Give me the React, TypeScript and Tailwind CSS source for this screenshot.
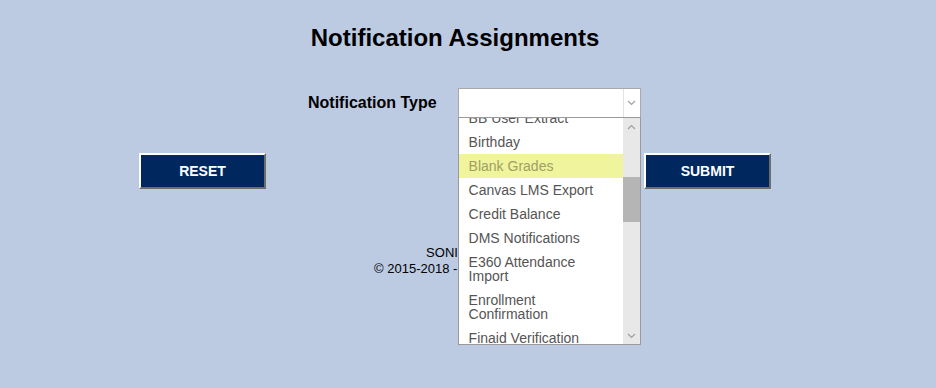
const items = [
  'BB User Extract',
  'Birthday',
  'Blank Grades',
  'Canvas LMS Export',
  'Credit Balance',
  'DMS Notifications',
  'E360 Attendance Import',
  'Enrollment Confirmation',
  'Finaid Verification',
  'Financial Aid Award',
]

function Chevron({ up }: { up?: boolean }) {
  return (
    <svg width="9" height="6" viewBox="0 0 9 6" className="block">
      <path
        d={up ? 'M1 5 L4.5 1.5 L8 5' : 'M1 1 L4.5 4.5 L8 1'}
        fill="none"
        stroke="#a0a0a0"
        strokeWidth="1.2"
      />
    </svg>
  )
}

export default function App() {
  return (
    <div className="w-[936px] h-[388px] bg-[#bccae2] font-['Liberation_Sans',Arial,sans-serif] overflow-hidden">
      <div className="w-[910px] flex flex-col">
        <h1 className="pt-[24px] text-center text-[24px] leading-[28px] font-bold text-black">
          Notification Assignments
        </h1>

        <div className="mt-[36px] flex items-center pl-[308px]">
          <label className="text-[16px] font-bold text-black">Notification Type</label>
          <div className="relative ml-[21px] w-[183px] h-[30px] border border-[#a9a9a9] bg-white">
            <div className="absolute right-0 top-0 h-full w-[17px] border-l border-[#e3e3e3] flex items-center justify-center">
              <Chevron />
            </div>

            {/* open option list */}
            <div className="absolute left-[-1px] top-[28px] w-[183px] h-[228px] border border-[#9a9a9a] bg-white flex z-10">
              <div className="flex-1 overflow-hidden">
                <ul className="mt-[-12px]">
                  {items.map((item) => {
                    const active = item === 'Blank Grades'
                    return (
                      <li
                        key={item}
                        className={
                          active
                            ? 'px-[10px] py-[5px] text-[14px] leading-[14px] bg-[#f0f49c] text-[#a0a064]'
                            : 'px-[10px] py-[5px] text-[14px] leading-[14px] text-[#555555]'
                        }
                      >
                        {item}
                      </li>
                    )
                  })}
                </ul>
              </div>
              <div className="w-[17px] bg-[#e8e8e8] flex flex-col">
                <div className="h-[17px] flex items-center justify-center">
                  <Chevron up />
                </div>
                <div className="mt-[42px] h-[45px] bg-[#b5b5b5]" />
                <div className="flex-1" />
                <div className="h-[17px] flex items-center justify-center">
                  <Chevron />
                </div>
              </div>
            </div>
          </div>
        </div>

        <div className="mt-[35px] flex justify-between px-[139px]">
          <button className="w-[127px] h-[36px] bg-[#00285f] text-white text-[14px] font-bold border-2 border-t-white border-l-white border-b-[#6d6d6d] border-r-[#6d6d6d]">
            RESET
          </button>
          <button className="w-[127px] h-[36px] bg-[#00285f] text-white text-[14px] font-bold border-2 border-t-white border-l-white border-b-[#6d6d6d] border-r-[#6d6d6d]">
            SUBMIT
          </button>
        </div>

        <div className="mt-[56px] text-center text-[13px] leading-[16px] text-black">
          <div>SONIS v5</div>
          <div className="pl-[6px]">© 2015-2018 - Jenzabar, Inc.</div>
        </div>
      </div>
    </div>
  )
}
